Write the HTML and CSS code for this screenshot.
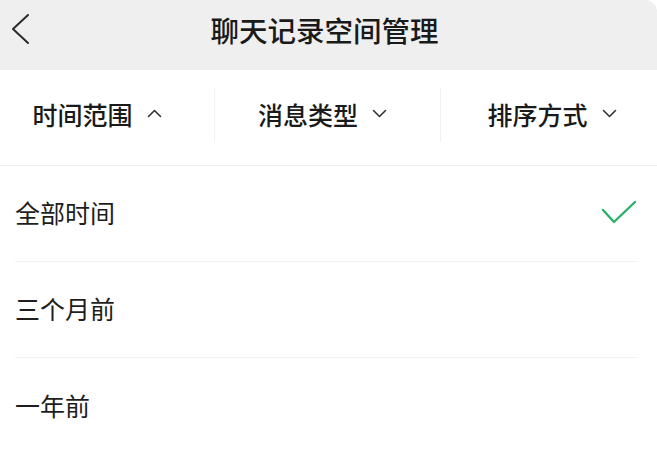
FILE: index.html
```html
<!DOCTYPE html>
<html lang="zh-CN">
<head>
<meta charset="utf-8">
<title>聊天记录空间管理</title>
<link rel="stylesheet" href="styles.css">
</head>
<body>
<div class="page">
  <header class="topbar">
    <span class="back">
      <svg width="20" height="32" viewBox="0 0 20 32"><path d="M16 1 L1 15 L16 29" fill="none" stroke="#2b2b2b" stroke-width="2" stroke-linecap="round" stroke-linejoin="round"/></svg>
    </span>
    <h1 class="title">聊天记录空间管理</h1>
  </header>
  <nav class="filters">
    <div class="filter first">
      <span class="label">时间范围</span>
      <svg class="caret" width="15" height="9" viewBox="0 0 15 9"><path d="M1.5 7.5 L7.5 1.5 L13.5 7.5" fill="none" stroke="#333" stroke-width="1.6" stroke-linecap="round" stroke-linejoin="round"/></svg>
    </div>
    <div class="filter second">
      <span class="label">消息类型</span>
      <svg class="caret" width="15" height="9" viewBox="0 0 15 9"><path d="M1.5 1.5 L7.5 7.5 L13.5 1.5" fill="none" stroke="#333" stroke-width="1.6" stroke-linecap="round" stroke-linejoin="round"/></svg>
    </div>
    <div class="filter third">
      <span class="label">排序方式</span>
      <svg class="caret" width="15" height="9" viewBox="0 0 15 9"><path d="M1.5 1.5 L7.5 7.5 L13.5 1.5" fill="none" stroke="#333" stroke-width="1.6" stroke-linecap="round" stroke-linejoin="round"/></svg>
    </div>
  </nav>
  <ul class="options">
    <li class="option">
      <span>全部时间</span>
      <svg class="check" width="36" height="26" viewBox="0 0 36 26"><path d="M2 10 L13 22 L34 2" fill="none" stroke="#2bb06c" stroke-width="2.4" stroke-linecap="round" stroke-linejoin="round"/></svg>
    </li>
    <li class="option"><span>三个月前</span></li>
    <li class="option"><span>一年前</span></li>
  </ul>
</div>
</body>
</html>
```
FILE: styles.css
```css
* { box-sizing: border-box; }
html, body { margin: 0; padding: 0; background: #fff; }
body {
  font-family: "Noto Sans CJK SC", "Noto Sans", sans-serif;
  color: #1e1e1e;
}
.page { width: 657px; height: 454px; overflow: hidden; background: #fff; }
.topbar {
  height: 70px;
  background: #efefef;
  border-top-right-radius: 12px;
  display: flex;
  align-items: center;
  justify-content: center;
  position: relative;
}
.back {
  position: absolute;
  left: 12px;
  top: 14px;
  width: 20px;
  height: 32px;
  display: block;
}
.back svg { display: block; }
.title {
  margin: 0 8px 10px 0;
  font-size: 28.5px;
  font-weight: 500;
  line-height: 1;
  letter-spacing: 0;
  color: #1a1a1a;
}
.filters {
  height: 96px;
  display: grid;
  grid-template-columns: 214px 226px 1fr;
  border-bottom: 1px solid #f0f0f0;
  align-items: center;
}
.filter {
  display: flex;
  align-items: center;
  justify-content: center;
  gap: 14px;
  height: 54px;
  margin-top: -6px;
  border-left: 1px solid #f1f1f1;
}
.filter.first { border-left: none; padding-right: 20px; }
.filter.second { padding-right: 10px; }
.filter.third { padding-left: 6px; }
.label { font-size: 25px; line-height: 1; font-weight: 500; color: #1a1a1a; }
.caret { display: block; margin-top: -2px; }
.options { list-style: none; margin: 0; padding: 0 19px 0 15px; }
.option {
  height: 96px;
  display: flex;
  align-items: center;
  justify-content: space-between;
  border-bottom: 1px solid #f1f1f1;
  font-size: 25px;
  line-height: 1;
  padding-bottom: 2px;
}
.option:last-child { border-bottom: none; }
.check { display: block; margin-right: 1px; }
```
